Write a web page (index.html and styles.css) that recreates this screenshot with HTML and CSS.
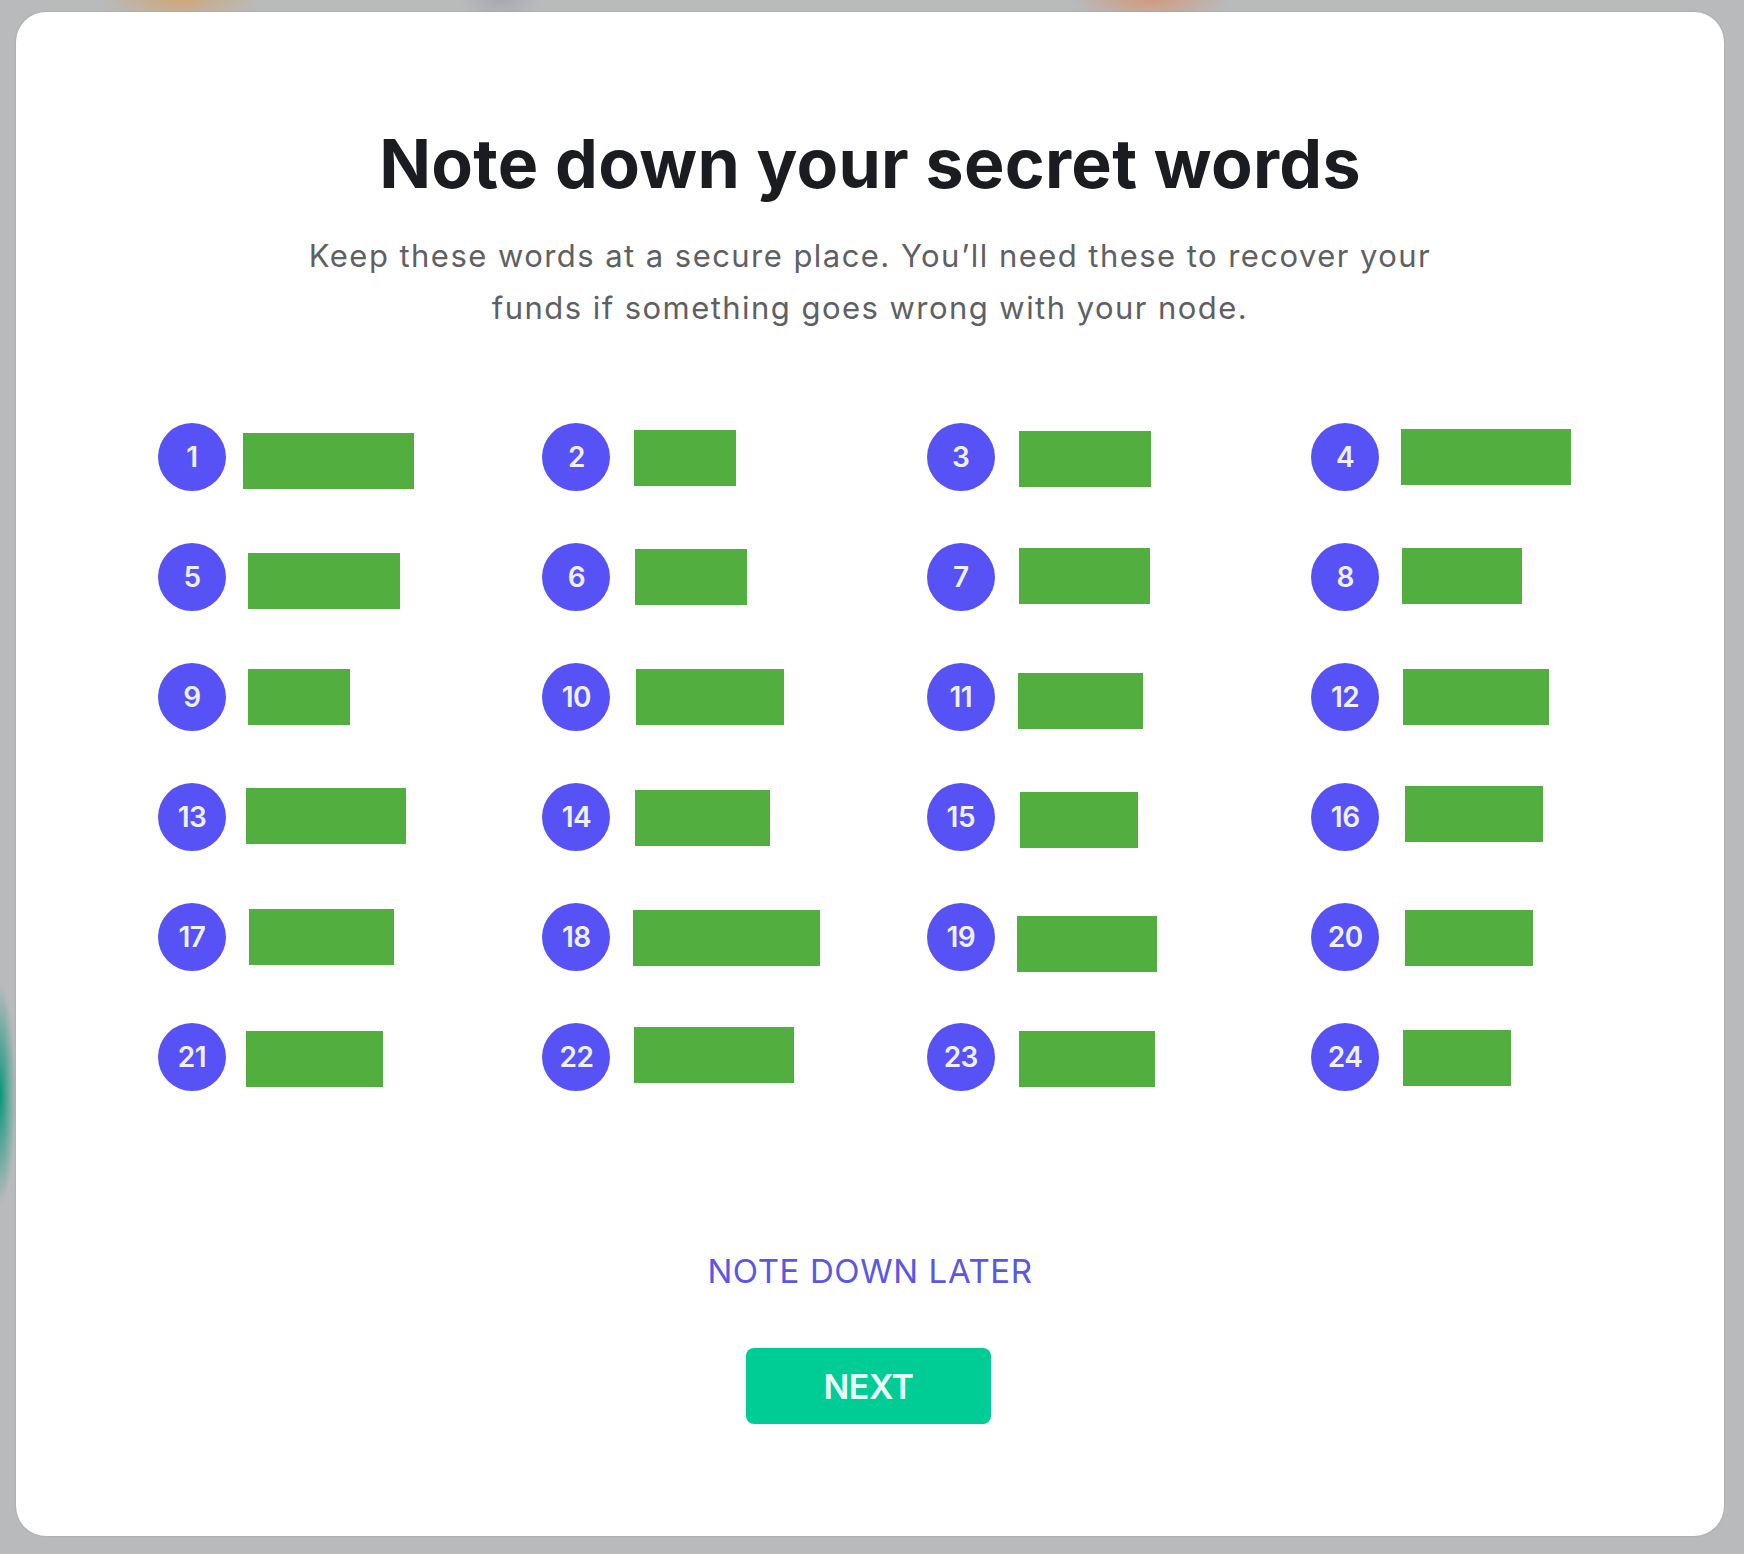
FILE: index.html
```html
<!DOCTYPE html>
<html lang="en">
<head>
<meta charset="utf-8">
<title>Note down your secret words</title>
<link rel="stylesheet" href="styles.css">
</head>
<body>
<div class="backdrop">
  <main class="card">
    <h1 class="title">Note down your secret words</h1>
    <p class="subtitle">Keep these words at a secure place. You’ll need these to recover your<br>funds if something goes wrong with your node.</p>

    <ol class="words">
      <li class="word"><span class="num">1</span><span class="redact" style="width:171px;margin-left:17px;transform:translateY(4px)"></span></li>
      <li class="word"><span class="num">2</span><span class="redact" style="width:102px;margin-left:24px;transform:translateY(1px)"></span></li>
      <li class="word"><span class="num">3</span><span class="redact" style="width:132px;margin-left:24px;transform:translateY(2px)"></span></li>
      <li class="word"><span class="num">4</span><span class="redact" style="width:170px;margin-left:22px;transform:translateY(0px)"></span></li>

      <li class="word"><span class="num">5</span><span class="redact" style="width:152px;margin-left:22px;transform:translateY(4px)"></span></li>
      <li class="word"><span class="num">6</span><span class="redact" style="width:112px;margin-left:25px;transform:translateY(0px)"></span></li>
      <li class="word"><span class="num">7</span><span class="redact" style="width:131px;margin-left:24px;transform:translateY(-1px)"></span></li>
      <li class="word"><span class="num">8</span><span class="redact" style="width:120px;margin-left:23px;transform:translateY(-1px)"></span></li>

      <li class="word"><span class="num">9</span><span class="redact" style="width:102px;margin-left:22px;transform:translateY(0px)"></span></li>
      <li class="word"><span class="num">10</span><span class="redact" style="width:148px;margin-left:26px;transform:translateY(0px)"></span></li>
      <li class="word"><span class="num">11</span><span class="redact" style="width:125px;margin-left:23px;transform:translateY(4px)"></span></li>
      <li class="word"><span class="num">12</span><span class="redact" style="width:146px;margin-left:24px;transform:translateY(0px)"></span></li>

      <li class="word"><span class="num">13</span><span class="redact" style="width:160px;margin-left:20px;transform:translateY(-1px)"></span></li>
      <li class="word"><span class="num">14</span><span class="redact" style="width:135px;margin-left:25px;transform:translateY(1px)"></span></li>
      <li class="word"><span class="num">15</span><span class="redact" style="width:118px;margin-left:25px;transform:translateY(3px)"></span></li>
      <li class="word"><span class="num">16</span><span class="redact" style="width:138px;margin-left:26px;transform:translateY(-3px)"></span></li>

      <li class="word"><span class="num">17</span><span class="redact" style="width:145px;margin-left:23px;transform:translateY(0px)"></span></li>
      <li class="word"><span class="num">18</span><span class="redact" style="width:187px;margin-left:23px;transform:translateY(1px)"></span></li>
      <li class="word"><span class="num">19</span><span class="redact" style="width:140px;margin-left:22px;transform:translateY(7px)"></span></li>
      <li class="word"><span class="num">20</span><span class="redact" style="width:128px;margin-left:26px;transform:translateY(1px)"></span></li>

      <li class="word"><span class="num">21</span><span class="redact" style="width:137px;margin-left:20px;transform:translateY(2px)"></span></li>
      <li class="word"><span class="num">22</span><span class="redact" style="width:160px;margin-left:24px;transform:translateY(-2px)"></span></li>
      <li class="word"><span class="num">23</span><span class="redact" style="width:136px;margin-left:24px;transform:translateY(2px)"></span></li>
      <li class="word"><span class="num">24</span><span class="redact" style="width:108px;margin-left:24px;transform:translateY(1px)"></span></li>
    </ol>

    <a class="later" href="#">NOTE DOWN LATER</a>
    <button class="next" type="button">NEXT</button>
  </main>
</div>
</body>
</html>
```

FILE: styles.css
```css
html, body {
  margin: 0;
  padding: 0;
}

body {
  width: 1744px;
  height: 1554px;
  overflow: hidden;
  font-family: "Inter", "Noto Sans", "Liberation Sans", sans-serif;
  background-color: #b9babc;
  background-image:
    radial-gradient(ellipse 80px 22px at 180px 0px, rgba(214, 160, 100, 0.75), rgba(214, 160, 100, 0) 100%),
    radial-gradient(ellipse 80px 22px at 1150px 0px, rgba(220, 140, 100, 0.7), rgba(220, 140, 100, 0) 100%),
    radial-gradient(ellipse 40px 20px at 500px 0px, rgba(150, 150, 160, 0.5), rgba(150, 150, 160, 0) 100%),
    radial-gradient(ellipse 16px 110px at 0px 1095px, rgba(10, 150, 120, 1), rgba(10, 150, 120, 0) 100%);
}

.backdrop {
  display: flex;
  padding: 12px 20px 18px 16px;
}

.card {
  box-sizing: border-box;
  width: 1708px;
  height: 1524px;
  background: #ffffff;
  border-radius: 30px;
  box-shadow: 0 0 2px rgba(0, 0, 0, 0.18);
  display: flex;
  flex-direction: column;
  align-items: center;
  padding-top: 110px;
}

.title {
  margin: 0;
  font-size: 68px;
  line-height: 82px;
  font-weight: 700;
  color: #1b1c22;
  letter-spacing: 0.3px;
}

.subtitle {
  margin: 26px 0 0;
  font-size: 31px;
  line-height: 52px;
  font-weight: 400;
  color: #606064;
  letter-spacing: 1.45px;
  text-align: center;
}

.words {
  list-style: none;
  margin: 89px 0 0;
  padding: 0;
  align-self: flex-start;
  margin-left: 142px;
  display: grid;
  grid-template-columns: repeat(4, 384.4px);
  row-gap: 52px;
}

.word {
  display: flex;
  align-items: center;
  height: 68px;
}

.num {
  flex: none;
  width: 68px;
  height: 68px;
  border-radius: 50%;
  background: #5752f6;
  color: #eef0ff;
  font-size: 28px;
  font-weight: 600;
  display: flex;
  align-items: center;
  justify-content: center;
  letter-spacing: -0.5px;
}

.redact {
  flex: none;
  display: block;
  height: 56px;
  background: #53ae40;
}

.later {
  margin-top: 160px;
  font-size: 33px;
  line-height: 40px;
  font-weight: 400;
  color: #5b57e6;
  text-decoration: none;
  letter-spacing: 0.6px;
}

.next {
  margin-top: 57px;
  margin-left: -3px;
  width: 245px;
  height: 76px;
  border: none;
  border-radius: 8px;
  background: #00cc96;
  color: #ecfff7;
  font-family: inherit;
  font-size: 34px;
  font-weight: 600;
  letter-spacing: -0.5px;
  padding: 0;
  cursor: pointer;
}
```
